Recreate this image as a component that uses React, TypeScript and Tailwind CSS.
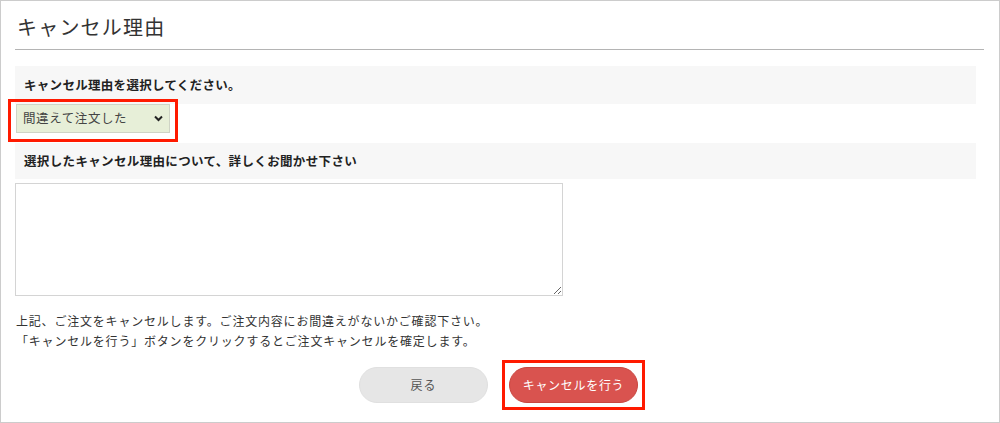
import React from "react";

const font = { fontFamily: '"Noto Sans CJK JP", "Noto Sans", sans-serif' };

export default function App() {
  return (
    <div
      className="w-[1000px] h-[423px] border border-[#cccccc] bg-white text-[#333] overflow-hidden"
      style={font}
    >
      <div className="ml-[14px] mr-[15px] pt-[12px] pb-[8px] border-b border-[#b4b4b4]">
        <h1 className="text-[20px] leading-[28px] tracking-[1.2px] pl-[2px] font-normal text-[#333]">
          キャンセル理由
        </h1>
      </div>

      <div className="ml-[14px] mr-[23px] mt-[16px]">
        <div className="bg-[#f7f7f7] h-[38px] flex items-center pl-[9px] pt-[1px]">
          <span className="text-[12.5px] tracking-[0.3px] font-bold text-[#222]">
            キャンセル理由を選択してください。
          </span>
        </div>

        <div className="relative w-[154px] h-[29px] ml-[1px]">
          <div className="absolute -left-[8px] -top-[5px] w-[170px] h-[43px] border-[3px] border-[#ff1a00]" />
          <div className="relative w-[154px] h-[29px] bg-[#e7efd8] border border-[#cfd4c6] flex items-center pl-[6px]">
            <span className="text-[12.5px] tracking-[0.6px] text-[#444]">間違えて注文した</span>
            <svg
              className="absolute right-[6px] top-[10px]"
              width="9"
              height="7"
              viewBox="0 0 9 7"
            >
              <path d="M1 1.5 L4.5 5 L8 1.5" fill="none" stroke="#222" strokeWidth="2" />
            </svg>
          </div>
        </div>

        <div className="bg-[#f7f7f7] h-[36px] flex items-center pl-[9px] mt-[10px]">
          <span className="text-[12.5px] tracking-[0.35px] font-bold text-[#222]">
            選択したキャンセル理由について、詳しくお聞かせ下さい
          </span>
        </div>

        <textarea className="block mt-[4px] w-[548px] h-[113px] border border-[#d4d4d4] bg-white outline-none" />

        <div className="mt-[15px] pl-[1px] text-[12px] leading-[20px] tracking-[0.8px] text-[#333]">
          <p>上記、ご注文をキャンセルします。ご注文内容にお間違えがないかご確認下さい。</p>
          <p>「キャンセルを行う」ボタンをクリックするとご注文キャンセルを確定します。</p>
        </div>
      </div>

      <div className="flex justify-center gap-[21px] mt-[16px] pr-[3px]">
        <button className="w-[129px] h-[36px] rounded-full bg-[#e6e6e6] border border-[#e0e0e0] text-[12px] tracking-[1px] text-[#555]">
          戻る
        </button>
        <div className="relative">
          <div className="absolute -left-[7px] -top-[7px] w-[143px] h-[50px] border-[3px] border-[#ff1a00]" />
          <button className="relative w-[129px] h-[36px] rounded-full bg-[#d9534f] border border-[#c9463f] text-[12px] tracking-[0.7px] text-white">
            キャンセルを行う
          </button>
        </div>
      </div>
    </div>
  );
}
